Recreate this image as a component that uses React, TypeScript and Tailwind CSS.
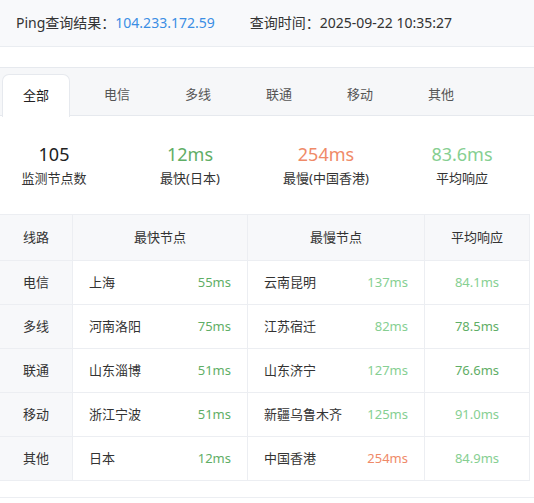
import React from 'react';

type Row = {
  line: string;
  fastName: string;
  fast: number;
  slowName: string;
  slow: number;
  avg: string;
};

const rows: Row[] = [
  { line: '电信', fastName: '上海', fast: 55, slowName: '云南昆明', slow: 137, avg: '84.1' },
  { line: '多线', fastName: '河南洛阳', fast: 75, slowName: '江苏宿迁', slow: 82, avg: '78.5' },
  { line: '联通', fastName: '山东淄博', fast: 51, slowName: '山东济宁', slow: 127, avg: '76.6' },
  { line: '移动', fastName: '浙江宁波', fast: 51, slowName: '新疆乌鲁木齐', slow: 125, avg: '91.0' },
  { line: '其他', fastName: '日本', fast: 12, slowName: '中国香港', slow: 254, avg: '84.9' },
];

const tabs = ['全部', '电信', '多线', '联通', '移动', '其他'];

// latency colour by threshold
const msColor = (ms: number) => {
  if (ms < 80) return 'text-[#5fae66]';
  if (ms < 200) return 'text-[#86cf92]';
  return 'text-[#ef8a68]';
};

const App: React.FC = () => {
  return (
    <div
      className="w-[534px] min-h-[503px] bg-white text-[#333] text-[13px]"
      style={{ fontFamily: '"Noto Sans", "Noto Sans CJK SC", sans-serif' }}
    >
      {/* Result header */}
      <div className="h-[47px] bg-[#f8f9fb] border-b border-[#eaedf1] flex items-center pl-[16px] pb-[1px] text-[14px]">
        <span>Ping查询结果：</span>
        <span className="text-[#3b8ee4]">104.233.172.59</span>
        <span className="ml-[35px]">查询时间：2025-09-22 10:35:27</span>
      </div>

      <div className="h-[20px]" />

      {/* Tabs */}
      <div className="h-[49px] bg-[#f6f7f9] border-t border-[#e6e9ee] flex items-end">
        <div className="flex w-full border-b border-[#e6e9ee] h-[42px] pl-[2px]">
          {tabs.map((t, i) => (
            <button
              key={t}
              className={`w-[68px] mr-[13px] h-[42px] flex items-center justify-center text-[13px] ${
                i === 0
                  ? 'bg-white border border-b-0 border-[#e6e9ee] rounded-t-[7px] text-[#222] -mb-px h-[43px]'
                  : 'text-[#555]'
              }`}
            >
              {t}
            </button>
          ))}
        </div>
      </div>

      {/* Summary */}
      <div className="grid grid-cols-4 gap-[28px] w-[516px] pt-[26px] pb-[25px]">
        <div className="flex flex-col items-center">
          <div className="text-[18px] leading-[24px] text-[#222]">105</div>
          <div className="mt-[1px] leading-[22px]">监测节点数</div>
        </div>
        <div className="flex flex-col items-center">
          <div className="text-[18px] leading-[24px] text-[#5fae66]">12ms</div>
          <div className="mt-[1px] leading-[22px]">最快(日本)</div>
        </div>
        <div className="flex flex-col items-center">
          <div className="text-[18px] leading-[24px] text-[#ef8a68]">254ms</div>
          <div className="mt-[1px] leading-[22px]">最慢(中国香港)</div>
        </div>
        <div className="flex flex-col items-center">
          <div className="text-[18px] leading-[24px] text-[#86cf92]">83.6ms</div>
          <div className="mt-[1px] leading-[22px]">平均响应</div>
        </div>
      </div>

      {/* Table */}
      <div className="w-[530px] border-t border-r border-[#eceef2]">
        <div className="grid grid-cols-[73px_175px_177px_1fr] h-[46px] bg-[#f7f8fa] border-b border-[#eceef2]">
          <div className="flex items-center justify-center border-r border-[#eceef2]">线路</div>
          <div className="flex items-center justify-center border-r border-[#eceef2]">最快节点</div>
          <div className="flex items-center justify-center border-r border-[#eceef2]">最慢节点</div>
          <div className="flex items-center justify-center">平均响应</div>
        </div>
        {rows.map((r) => (
          <div
            key={r.line}
            className="grid grid-cols-[73px_175px_177px_1fr] h-[44px] border-b border-[#eceef2]"
          >
            <div className="flex items-center justify-center bg-[#f7f8fa] border-r border-[#eceef2]">
              {r.line}
            </div>
            <div className="flex items-center justify-between px-[16px] border-r border-[#eceef2]">
              <span>{r.fastName}</span>
              <span className={msColor(r.fast)}>{r.fast}ms</span>
            </div>
            <div className="flex items-center justify-between px-[16px] border-r border-[#eceef2]">
              <span>{r.slowName}</span>
              <span className={msColor(r.slow)}>{r.slow}ms</span>
            </div>
            <div className={`flex items-center justify-center ${msColor(parseFloat(r.avg))}`}>
              {r.avg}ms
            </div>
          </div>
        ))}
      </div>

      <div className="h-[17px] border-b border-[#eceef2]" />
    </div>
  );
};

export default App;
